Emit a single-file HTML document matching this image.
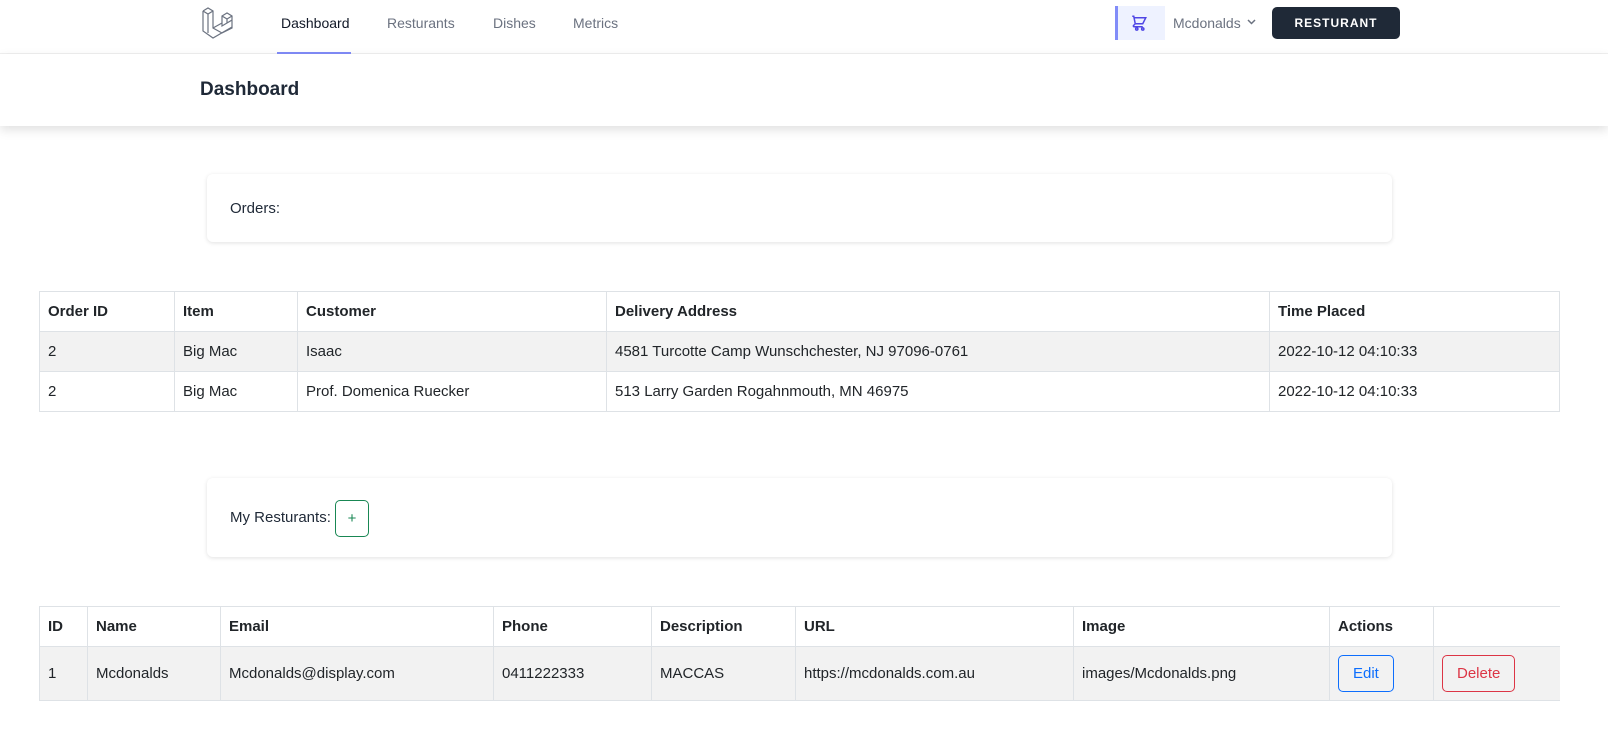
<!DOCTYPE html>
<html><head><meta charset="utf-8"><style>
*{box-sizing:border-box;margin:0;padding:0}
body{width:1608px;height:738px;background:#fff;font-family:"Liberation Sans",sans-serif;color:#212529;font-size:15px;overflow:hidden;position:relative}
.nav{position:absolute;left:0;top:0;width:1608px;height:54px;border-bottom:1px solid #f0f0f0;background:#fff}
.nav a{position:absolute;top:15px;font-size:14px;color:#6b7280;text-decoration:none}
.hdr{position:absolute;top:54px;left:0;width:1608px;height:72px;background:#fff;box-shadow:0 4px 10px rgba(0,0,0,.12)}
.hdr h2{position:absolute;left:200px;top:25px;font-size:19px;font-weight:600;color:#1f2937}
.card{position:absolute;left:207px;width:1185px;background:#fff;border-radius:6px;box-shadow:0 1px 4px rgba(0,0,0,.12);font-size:15px;color:#1f2937}
table{position:absolute;left:39px;border-collapse:collapse;font-size:15px}
td,th{border:1px solid #dee2e6;padding:0 8px;text-align:left;height:40px;vertical-align:middle}
th{font-weight:bold}
tr.s td{background:#f2f2f2}
.btn{display:inline-block;border:1px solid;border-radius:5px;padding:0 14px;height:37px;line-height:35px;font-size:15px}
</style></head><body>
<div class="nav">
<svg style="position:absolute;left:201px;top:6px" width="38" height="34" viewBox="0 0 38 34" fill="none" stroke="#6b7280" stroke-width="1.2"><path d="M2 5 L7 2 L12 5 L12 22 L21 27 L31 22 L31 14 M2 5 V25 L12 32 L31 21 M2 5 L7 8 L12 5 M7 8 V27 M12 22 L21 17 M21 10 L26 7 L31 10 L31 14 L21 20 Z M21 10 V20 M26 13 L31 10 M21 10 L26 13 V17"/></svg>
<a style="left:281px;color:#111827">Dashboard</a>
<div style="position:absolute;left:277px;top:52px;width:74px;height:2px;background:#818cf8"></div>
<a style="left:387px">Resturants</a>
<a style="left:493px">Dishes</a>
<a style="left:573px">Metrics</a>
<div style="position:absolute;left:1115px;top:6px;width:50px;height:34px;background:#eef2ff;border-left:3px solid #818cf8"></div>
<svg style="position:absolute;left:1130px;top:14px" width="18" height="18" viewBox="0 0 24 24" fill="none" stroke="#4f46e5" stroke-width="2"><path d="M3 3h2l.4 2M7 13h10l4-8H5.4M7 13L5.4 5M7 13l-2.3 2.3c-.6.6-.2 1.7.7 1.7H17"/><circle cx="9" cy="20" r="1.5"/><circle cx="17" cy="20" r="1.5"/></svg>
<a style="left:1173px">Mcdonalds</a>
<svg style="position:absolute;left:1247px;top:19px" width="9" height="6" viewBox="0 0 9 6" fill="none" stroke="#6b7280" stroke-width="1.5"><path d="M1 1l3.5 3.5L8 1"/></svg>
<div style="position:absolute;left:1272px;top:7px;width:128px;height:32px;background:#1f2937;border-radius:5px;color:#fff;font-size:12px;font-weight:bold;letter-spacing:1px;text-align:center;line-height:32px">RESTURANT</div>
</div>
<div class="hdr"><h2>Dashboard</h2></div>
<div class="card" style="top:174px;height:68px;padding:26px 23px">Orders:</div>
<table style="top:291px;width:1521px">
<tr><th style="width:135px">Order ID</th><th style="width:123px">Item</th><th style="width:309px">Customer</th><th style="width:663px">Delivery Address</th><th>Time Placed</th></tr>
<tr class="s"><td>2</td><td>Big Mac</td><td>Isaac</td><td>4581 Turcotte Camp Wunschchester, NJ 97096-0761</td><td>2022-10-12 04:10:33</td></tr>
<tr><td>2</td><td>Big Mac</td><td>Prof. Domenica Ruecker</td><td>513 Larry Garden Rogahnmouth, MN 46975</td><td>2022-10-12 04:10:33</td></tr>
</table>
<div class="card" style="top:478px;height:79px;padding:0 23px;line-height:79px">My Resturants: <span style="display:inline-block;width:34px;height:37px;border:1px solid #198754;border-radius:5px;color:#198754;text-align:center;line-height:35px;vertical-align:middle">+</span></div>
<table style="top:606px;width:1521px">
<tr><th style="width:48px">ID</th><th style="width:133px">Name</th><th style="width:273px">Email</th><th style="width:158px">Phone</th><th style="width:144px">Description</th><th style="width:278px">URL</th><th style="width:256px">Image</th><th style="width:104px">Actions</th><th style="border-right:none"></th></tr>
<tr class="s"><td style="height:54px">1</td><td>Mcdonalds</td><td>Mcdonalds@display.com</td><td>0411222333</td><td>MACCAS</td><td>https://mcdonalds.com.au</td><td>images/Mcdonalds.png</td><td><span class="btn" style="color:#0d6efd;border-color:#0d6efd">Edit</span></td><td style="border-right:none"><span class="btn" style="color:#dc3545;border-color:#dc3545">Delete</span></td></tr>
</table>
</body></html>
